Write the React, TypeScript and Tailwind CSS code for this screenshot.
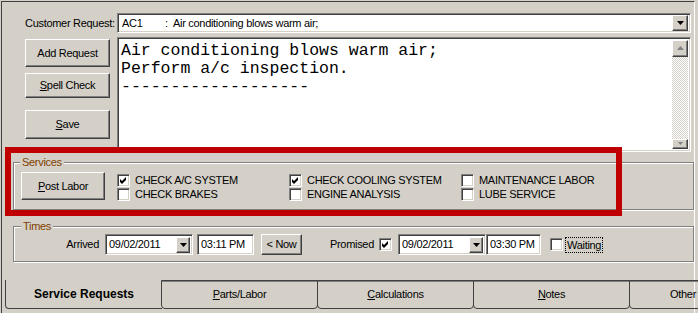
import React from "react"

const raised =
  "bg-[#d4d0c8] border border-t-white border-l-white border-r-[#404040] border-b-[#404040] shadow-[inset_-1px_-1px_0_#808080]"
const sunken =
  "border border-t-[#808080] border-l-[#808080] border-r-white border-b-white shadow-[inset_1px_1px_0_#404040,inset_-1px_-1px_0_#d4d0c8]"
const etched = "border border-[#808080] shadow-[inset_1px_1px_0_#fff,1px_1px_0_#fff]"

function DownArrow() {
  return (
    <svg width="7" height="4" viewBox="0 0 7 4">
      <path d="M0 0 H7 L3.5 4 Z" fill="#000" />
    </svg>
  )
}

function Check({ checked }: { checked?: boolean }) {
  return (
    <span className={`w-[13px] h-[13px] shrink-0 bg-white flex items-center justify-center ${sunken}`}>
      {checked && (
        <svg width="7" height="7" viewBox="0 0 7 7">
          <path d="M0 2 L2 4 L6 0 L6 3 L2 7 L0 5 Z" fill="#000" />
        </svg>
      )}
    </span>
  )
}

function Button({ children, className }: { children: React.ReactNode; className: string }) {
  return <div className={`${raised} flex items-center justify-center ${className}`}>{children}</div>
}

function DateBox({ value }: { value: string }) {
  return (
    <div className={`w-[88px] h-[21px] bg-white flex items-center p-[2px] ${sunken}`}>
      <span className="flex-1 pl-[1px]">{value}</span>
      <div className={`w-[14px] h-[16px] flex items-center justify-center ${raised}`}>
        <DownArrow />
      </div>
    </div>
  )
}

const services = [
  [
    { label: "CHECK A/C SYSTEM", on: true },
    { label: "CHECK BRAKES", on: false },
  ],
  [
    { label: "CHECK COOLING SYSTEM", on: true },
    { label: "ENGINE ANALYSIS", on: false },
  ],
  [
    { label: "MAINTENANCE LABOR", on: false },
    { label: "LUBE SERVICE", on: false },
  ],
]

const tabs = [
  { k: "P", rest: "arts/Labor" },
  { k: "C", rest: "alculations" },
  { k: "N", rest: "otes" },
]

export default function App() {
  return (
    <div className="relative w-[698px] h-[313px] overflow-hidden bg-[#d4d0c8] pt-[1px] pl-[1px] text-black text-[11px] tracking-[-0.3px] font-['Liberation_Sans',Arial,sans-serif]">
      <div className="w-[694px] h-[312px] border-t border-l border-[#404040] border-r border-r-white">
        {/* customer request */}
        <div className="flex items-center mt-[11px] ml-[23px]">
          <span className="w-[92px]">Customer Request:</span>
          <div className={`w-[574px] h-[20px] bg-white flex items-center p-[2px] ${sunken}`}>
            <span className="w-[45px] pl-[2px]">AC1</span>
            <span className="w-[8px]">:</span>
            <span className="flex-1">Air conditioning blows warm air;</span>
            <div className={`w-[16px] h-[16px] flex items-center justify-center ${raised}`}>
              <DownArrow />
            </div>
          </div>
        </div>

        <div className="flex mt-[4px] ml-[23px]">
          <div className="w-[85px] flex flex-col pt-[2px]">
            <Button className="h-[28px]">Add Request</Button>
            <Button className="h-[25px] mt-[6px]">
              <span>
                <u>S</u>pell Check
              </span>
            </Button>
            <Button className="h-[29px] mt-[12px]">
              <span>
                <u>S</u>ave
              </span>
            </Button>
          </div>
          <div className={`ml-[7px] w-[574px] h-[115px] bg-white flex p-[2px] ${sunken}`}>
            <div className="flex-1 pt-[2px] pl-[1px] whitespace-pre text-[16.5px] leading-[18px] tracking-normal font-['Liberation_Mono','Courier_New',monospace]">
              {"Air conditioning blows warm air;\nPerform a/c inspection.\n-------------------"}
            </div>
            <div className="w-[16px] flex flex-col bg-[repeating-conic-gradient(#fff_0_25%,#d4d0c8_0_50%)] bg-[length:2px_2px]">
              <div className={`h-[17px] flex items-center justify-center ${raised}`}>
                <svg width="7" height="5" viewBox="0 0 7 5">
                  <path d="M0 4 H7 L3.5 0 Z" fill="#808080" />
                </svg>
              </div>
              <div className="flex-1" />
              <div className={`h-[10px] flex items-start justify-center pt-[2px] ${raised}`}>
                <svg width="5" height="3" viewBox="0 0 5 3">
                  <path d="M0 0 H5 L2.5 3 Z" fill="#808080" />
                </svg>
              </div>
            </div>
          </div>
        </div>

        {/* services */}
        <fieldset className={`ml-[11px] mt-[4px] w-[681px] pl-[6px] pt-[3px] pb-[8px] ${etched}`}>
          <legend className="px-[2px] leading-[13px] text-[#804000] bg-[#d4d0c8]">Services</legend>
          <div className="flex items-start">
            <Button className="ml-[1px] w-[84px] h-[28px]">
              <span>
                <u>P</u>ost Labor
              </span>
            </Button>
            <div className="flex ml-[12px] mt-[2px]">
              {services.map((col, i) => (
                <div key={i} className="w-[172px] flex flex-col gap-[1px]">
                  {col.map((s) => (
                    <div key={s.label} className="flex items-center gap-[5px] h-[13px]">
                      <Check checked={s.on} />
                      <span>{s.label}</span>
                    </div>
                  ))}
                </div>
              ))}
            </div>
          </div>
        </fieldset>

        {/* times */}
        <fieldset className={`ml-[11px] mt-[10px] w-[681px] pl-[7px] pt-[1px] pb-[6px] ${etched}`}>
          <legend className="px-[2px] leading-[13px] text-[#804000] bg-[#d4d0c8]">Times</legend>
          <div className="flex items-center -ml-[7px]">
            <span className="w-[85px] text-right">Arrived</span>
            <div className="ml-[6px]">
              <DateBox value="09/02/2011" />
            </div>
            <div className={`ml-[4px] w-[57px] h-[21px] bg-white flex items-center pl-[3px] ${sunken}`}>03:11 PM</div>
            <Button className="ml-[7px] w-[41px] h-[21px]">&lt; Now</Button>
            <span className="w-[72px] text-right">Promised</span>
            <div className="ml-[5px]">
              <Check checked />
            </div>
            <div className="ml-[6px]">
              <DateBox value="09/02/2011" />
            </div>
            <div className={`w-[55px] h-[21px] bg-white flex items-center pl-[3px] ${sunken}`}>03:30 PM</div>
            <div className="ml-[9px]">
              <Check />
            </div>
            <span className="ml-[2px] px-[1px] border border-dotted border-black leading-[14px]">Waiting</span>
          </div>
        </fieldset>

        {/* tabs */}
        <div className="flex mt-[18px] ml-[3px] h-[29px]">
          <div className="w-[157px] shrink-0 border-l border-b border-[#404040] rounded-bl-[4px] flex items-center justify-center text-[12px] font-bold tracking-normal">
            Service Requests
          </div>
          {tabs.map((t) => (
            <div
              key={t.rest}
              className="w-[157px] shrink-0 border border-[#404040] rounded-b-[4px] -ml-[1px] shadow-[inset_0_1px_0_#808080] flex items-center justify-center"
            >
              <span>
                <u>{t.k}</u>
                {t.rest}
              </span>
            </div>
          ))}
          <div className="w-[108px] shrink-0 border border-[#404040] rounded-b-[4px] -ml-[1px] shadow-[inset_0_1px_0_#808080] flex items-center justify-center">
            Other
          </div>
        </div>
      </div>

      {/* red annotation frame */}
      <div className="absolute left-[5px] top-[147px] w-[617px] h-[69px] border-[6px] border-[#c00000]" />
    </div>
  )
}
